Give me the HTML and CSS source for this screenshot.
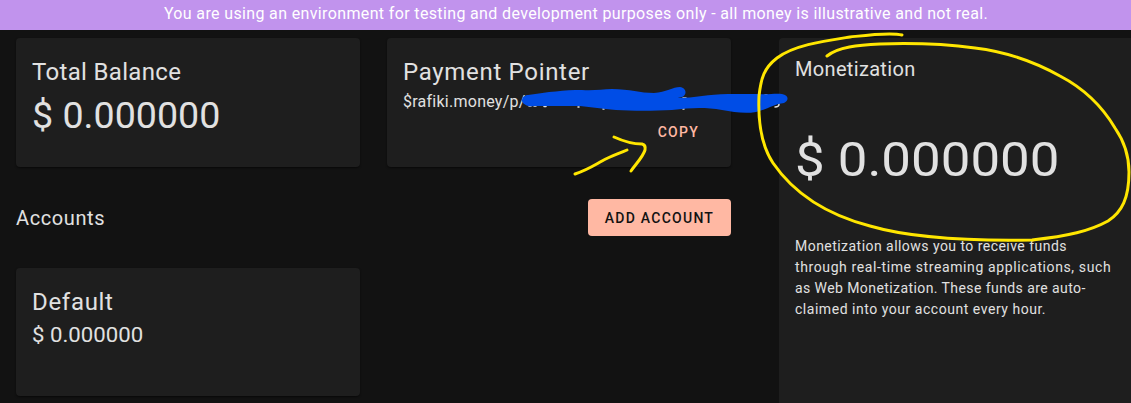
FILE: index.html
```html
<!DOCTYPE html>
<html lang="en">
<head>
<meta charset="utf-8">
<title>Accounts overview</title>
<link rel="stylesheet" href="styles.css">
</head>
<body>
<div class="banner">You are using an environment for testing and development purposes only - all money is illustrative and not real.</div>
<div class="layout">
  <main class="main">
    <div class="row">
      <section class="card">
        <h2 class="title title-total">Total Balance</h2>
        <p class="balance"><span class="wide wide-balance">$ 0.000000</span></p>
      </section>
      <section class="card">
        <h2 class="title">Payment Pointer</h2>
        <p class="pointer">$rafiki.money/p/</p>
        <div class="actions"><button class="copy">COPY</button></div>
      </section>
    </div>
    <div class="accounts-head">
      <h3 class="subtitle subtitle-accounts">Accounts</h3>
      <button class="add">ADD ACCOUNT</button>
    </div>
    <section class="card account">
      <h2 class="title">Default</h2>
      <p class="amount"><span class="wide wide-amount">$ 0.000000</span></p>
    </section>
  </main>
  <aside class="side">
    <h3 class="subtitle">Monetization</h3>
    <p class="total"><span class="wide wide-total">$ 0.000000</span></p>
    <p class="note"><span class="line-1">Monetization allows you to receive funds</span><br><span class="line-2">through real-time streaming applications, such</span><br><span class="line-3">as Web Monetization. These funds are auto-</span><br><span class="line-4">claimed into your account every hour.</span></p>
  </aside>
</div>
<svg class="markup" width="1131" height="403" viewBox="0 0 1131 403" fill="none" stroke-linecap="round" stroke-linejoin="round">
  <path stroke="#e1e1e1" stroke-width="1.5" d="M529 106H531M534 106H536M544 106.500H546M578 107H579M603 109H604M683 98H686M683 109H684M765 95H767M775 107Q779 107 779 104"/>
  <path fill="#004de6" d="M528 95C548 92 564 90 582 90C594 91 602 89 612 89C630 89 640 93 654 93C666 92 673 87 680 87C687 88 687 95 682 97C678 98 676 98 676 98C696 98 708 94 728 94L758 94C768 95 775 93 782 94C789 95 789 101 784 103C774 104 766 110 756 112C744 114 734 112 722 110C704 107 690 108 672 110C654 111 632 111 616 110C602 109 592 107 580 106L534 106C529 107 523 105 522 101C522 97 525 95 528 95Z"/>
  <g stroke="#ffe600" stroke-width="3">
    <path d="M575 174C587 170 593 166 602 161C611 156 618 154 627 150M614 137C625 142 632 144 642 144Q646 145 645 150C643 157 635 165 631 171"/>
    <path d="M902 35C890 32 868 35 850 37C824 41 794 45 777 58C764 68 761 78 759 96C758 120 761 145 773 163C795 195 828 215 870 226C911 238 972 241 1032 240C1068 236 1090 231 1108 221C1122 212 1129 198 1129 172C1129 155 1124 141 1115 128C1102 106 1083 88 1060 76C1035 62 1008 52 975 48C945 44 910 43 880 44C858 45 838 47 827 56"/>
  </g>
</svg>
</body>
</html>
```

FILE: styles.css
```css
* { box-sizing: border-box; }
body { margin: 0; height: 403px; overflow: hidden; background: #121212; color: #e1e1e1; font-family: Roboto, "Liberation Sans", sans-serif; }
h2, h3, p { margin: 0; font-weight: 400; white-space: nowrap; }
button { border: 0; padding: 0; background: none; font: 500 14px/36px Roboto, sans-serif; letter-spacing: 1.25px; white-space: nowrap; }
.banner { height: 30px; background: #c193ed; color: #fff; text-align: center; font-size: 16px; line-height: 28px; padding-left: 21px; letter-spacing: 0.36px; white-space: nowrap; }
.layout { display: flex; height: 373px; padding-top: 8px; padding-left: 16px; }
.main { width: 715px; margin-right: 48px; flex: none; }
.row { display: flex; justify-content: space-between; }
.card { width: 344px; height: 129px; padding: 16px; border-radius: 4px; background: #1e1e1e; box-shadow: 0 1px 2px #0008; }
.title { font-size: 24px; line-height: 36px; letter-spacing: 0.69px; }
.title-total { letter-spacing: 0.33px; }
.balance { font-size: 36px; line-height: 52px; height: 50px; }
.pointer { font-size: 16px; line-height: 24px; letter-spacing: 0.25px; }
.actions { display: flex; justify-content: flex-end; padding-right: 16px; }
.copy { color: #ffb8a3; }
.accounts-head { display: flex; justify-content: space-between; align-items: center; margin-top: 32px; height: 37px; }
.subtitle { font-size: 20px; line-height: 30px; letter-spacing: 0.33px; }
.subtitle-accounts { letter-spacing: 0.6px; }
.add { width: 143px; height: 37px; border-radius: 4px; background: #ffb8a3; color: #121212; }
.account { height: 128px; margin-top: 32px; }
.amount { font-size: 20px; line-height: 30px; }
.side { flex: 1; height: 373px; padding: 16px; background: #1e1e1e; border-radius: 4px 0 0 0; }
.total { font-size: 48px; line-height: 72px; margin-top: 40px; }
/* Stretches the figures horizontally, keeping their left edge in place. */
.wide { display: inline-block; transform-origin: 0 50%; }
.wide-balance { transform: scaleX(1.045); }
.wide-amount { transform: scaleX(1.11); }
.wide-total { transform: scaleX(1.1); }
.note { font-size: 14px; line-height: 21px; margin-top: 40px; }
.line-1 { letter-spacing: 0.46px; }
.line-2 { letter-spacing: 0.61px; }
.line-3 { letter-spacing: 0.42px; }
.line-4 { letter-spacing: 0.53px; }
.markup { position: absolute; left: 0; top: 0; }
```
